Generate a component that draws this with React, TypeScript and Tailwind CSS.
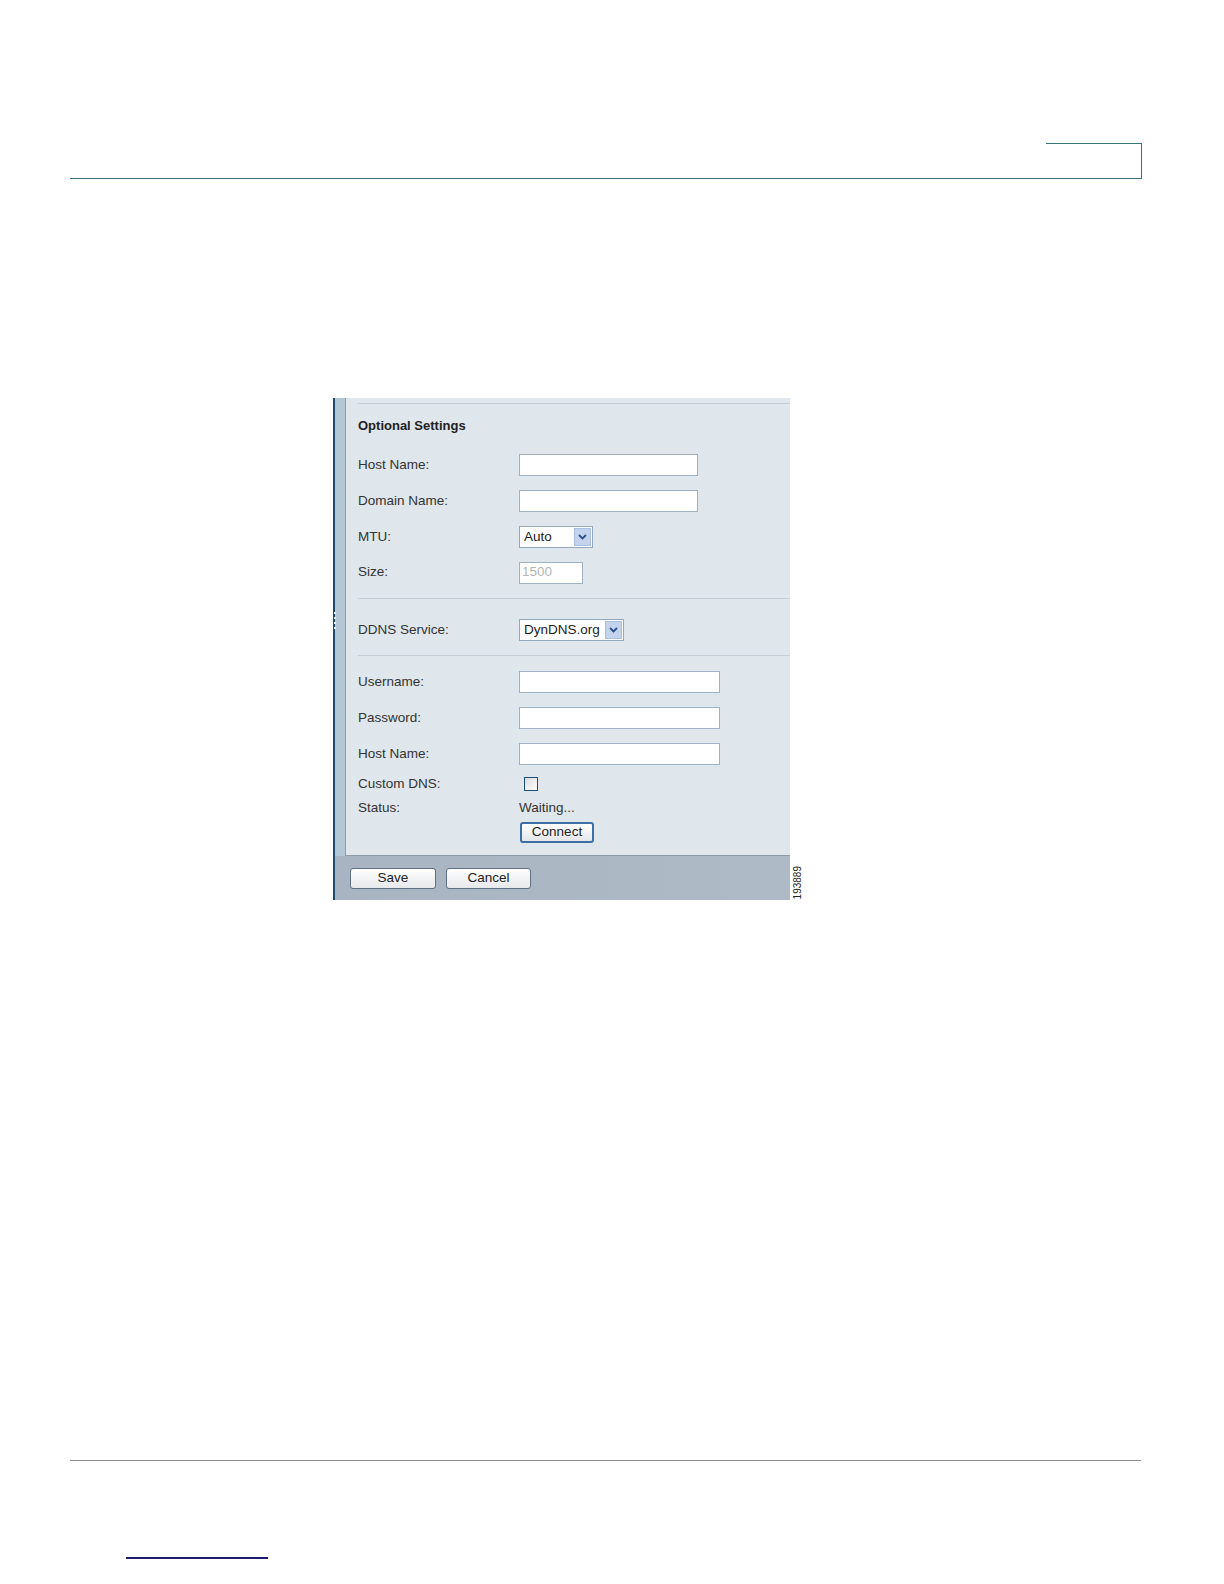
import React from "react";

const font = { fontFamily: '"Liberation Sans", Arial, sans-serif' };

function Chevron() {
  return (
    <svg width="9" height="6" viewBox="0 0 9 6">
      <path d="M1 1 L4.5 4.5 L8 1" fill="none" stroke="#2b4f86" strokeWidth="1.8" />
    </svg>
  );
}

function TextBox({ w, value }: { w: string; value?: string }) {
  return (
    <div className={`${w} h-[22px] bg-white border border-[#9fb1c3] flex items-center px-[2px] text-[13.5px] text-[#b5b5b5]`}>
      {value}
    </div>
  );
}

function Select({ w, value }: { w: string; value: string }) {
  return (
    <div className={`${w} h-[22px] bg-white border border-[#93a7bd] flex items-center justify-between pl-[4px] pr-[1px]`}>
      <span className="text-[13.5px] text-[#222]">{value}</span>
      <div className="w-[17px] h-[18px] bg-[#c3d3ee] border border-[#a9bee0] flex items-center justify-center">
        <Chevron />
      </div>
    </div>
  );
}

function Row({ label, children, h = "h-[36px]" }: { label: string; children?: React.ReactNode; h?: string }) {
  return (
    <div className={`flex items-center ${h}`}>
      <div className="w-[161px] text-[13.5px] text-[#333]">{label}</div>
      {children}
    </div>
  );
}

function Btn({ label, w }: { label: string; w: string }) {
  return (
    <div className={`${w} h-[21px] rounded-[3px] border border-[#5f7183] bg-gradient-to-b from-white to-[#e6e8ea] flex items-center justify-center text-[13.5px] text-[#222]`}>
      {label}
    </div>
  );
}

export default function App() {
  return (
    <div className="w-[1224px] h-[1584px] bg-white relative overflow-hidden" style={font}>
      <div className="h-[143px]" />
      <div className="ml-[70px] w-[1072px] border-b border-[#3a7280] flex justify-end">
        <div className="w-[96px] h-[35px] border-t border-r border-[#3a7280]" />
      </div>

      <div className="mt-[219px] ml-[333px] flex items-end">
        <div className="w-[457px] flex flex-col border-l-2 border-[#1e4b6c] bg-[#a9b5c2]">
          <div className="flex">
            <div className="w-[10px] bg-[#b4c7d4] flex flex-col items-start pt-[214px]">
              <div className="flex flex-col gap-[3px] -ml-[1px]">
                <div className="w-[2px] h-[2px] bg-[#e8eef4]" />
                <div className="w-[2px] h-[2px] bg-[#e8eef4]" />
                <div className="w-[2px] h-[2px] bg-[#e8eef4]" />
                <div className="w-[2px] h-[2px] bg-[#e8eef4]" />
              </div>
            </div>
            <div className="flex-1 bg-[#dfe6ec] border-l border-b border-[#8e9ba8] pl-[12px] pt-[5px] pb-[12px]">
              <div className="h-px bg-[#c5ced6]" />
              <div className="h-[43px] flex items-center text-[13px] font-bold text-[#222]">Optional Settings</div>
              <Row label="Host Name:"><TextBox w="w-[179px]" /></Row>
              <Row label="Domain Name:"><TextBox w="w-[179px]" /></Row>
              <Row label="MTU:"><Select w="w-[74px]" value="Auto" /></Row>
              <Row label="Size:" h="h-[35px]"><TextBox w="w-[64px]" value="1500" /></Row>
              <div className="h-px bg-[#c5ced6] mt-[8px]" />
              <div className="h-[13px]" />
              <Row label="DDNS Service:"><Select w="w-[105px]" value="DynDNS.org" /></Row>
              <div className="h-[7px]" />
              <div className="h-px bg-[#c5ced6]" />
              <div className="h-[8px]" />
              <Row label="Username:"><TextBox w="w-[201px]" /></Row>
              <Row label="Password:"><TextBox w="w-[201px]" /></Row>
              <Row label="Host Name:"><TextBox w="w-[201px]" /></Row>
              <Row label="Custom DNS:" h="h-[24px]">
                <div className="ml-[5px] w-[14px] h-[14px] border border-[#1c4f7e] bg-gradient-to-br from-[#dcdcdc] to-white" />
              </Row>
              <Row label="Status:" h="h-[24px]">
                <span className="text-[13.5px] text-[#333]">Waiting...</span>
              </Row>
              <div className="pl-[162px] mt-[2px]">
                <div className="w-[74px] h-[21px] rounded-[3px] border-2 border-[#3d6fa6] bg-gradient-to-b from-white to-[#e4e6e8] flex items-center justify-center text-[13.5px] text-[#222]">
                  Connect
                </div>
              </div>
            </div>
          </div>
          <div className="h-[44px] flex items-center pl-[15px] gap-[10px] bg-gradient-to-r from-[#a8b4c1] to-[#aebac6]">
            <Btn label="Save" w="w-[86px]" />
            <Btn label="Cancel" w="w-[85px]" />
          </div>
        </div>
        <div className="ml-[3px] mb-[1px] text-[10px] text-[#222] leading-none [writing-mode:vertical-rl] rotate-180">
          193889
        </div>
      </div>

      <div className="mt-[560px] ml-[70px] w-[1071px] h-px bg-[#8c8c8c]" />
      <div className="mt-[96px] ml-[126px] w-[142px] h-[2px] bg-[#1b1b72]" />
    </div>
  );
}
